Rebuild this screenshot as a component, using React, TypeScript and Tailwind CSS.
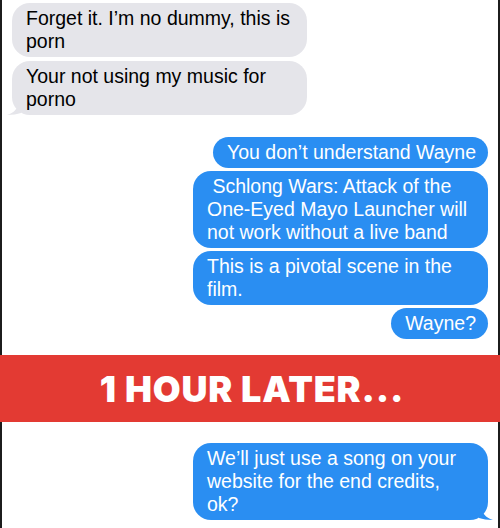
const received = [
  'Forget it. I\u2019m no dummy, this is porn',
  'Your not using my music for porno',
]

const sent = [
  'You don\u2019t understand Wayne',
  '\u00a0Schlong Wars: Attack of the One-Eyed Mayo Launcher will not work without a live band',
  'This is a pivotal scene in the film.',
  'Wayne?',
]

const Bubble = ({ text, mine, tail }: { text: string; mine?: boolean; tail?: boolean }) => {
  return (
    <div className={`relative w-fit max-w-[295px] rounded-[18px] py-[4px] text-[19.5px] leading-[23px] ${mine ? 'self-end bg-[#2a8ef2] pl-[14px] pr-[12px] text-white' : 'self-start bg-[#e5e5ea] pl-[14px] pr-[12px] text-black'}`}>
      {text}
      {tail && mine && (
        <svg className="absolute -right-[5px] bottom-0" width="14" height="12" viewBox="0 0 14 12">
          <path d="M0 0 C4 4 6 10 14 12 C8 12 4 11 0 10 Z" fill="#2a8ef2" />
        </svg>
      )}
      {tail && !mine && (
        <svg className="absolute -left-[5px] bottom-0" width="14" height="12" viewBox="0 0 14 12">
          <path d="M14 0 C10 4 8 10 0 12 C6 12 10 11 14 10 Z" fill="#e5e5ea" />
        </svg>
      )}
    </div>
  )
}

const App = () => {
  return (
    <div className="h-[528px] w-[500px] overflow-hidden bg-white" style={{ fontFamily: '"Liberation Sans", Arial, sans-serif' }}>
      <div className="flex flex-col border-x-2 border-[#1c1c1c] px-[10px] pt-[3px]">
        <div className="flex flex-col gap-[4px]">
          {received.map((t, i) => (
            <Bubble key={t} text={t} tail={i === received.length - 1} />
          ))}
        </div>
        <div className="mt-[22px] flex flex-col gap-[3px]">
          {sent.map((t) => (
            <Bubble key={t} text={t} mine />
          ))}
        </div>
        <div className="h-[16px]" />
      </div>
      <div className="flex h-[67px] items-center justify-center bg-[#e33a33] pl-[4px]">
        <span className="text-[36px] font-black tracking-[0.8px] text-white" style={{ fontFamily: 'Inter, sans-serif' }}>
          1 HOUR LATER...
        </span>
      </div>
      <div className="flex h-[120px] flex-col border-x-2 border-[#1c1c1c] px-[10px] pt-[21px]">
        <Bubble text={'We\u2019ll just use a song on your website for the end credits, ok?'} mine tail />
      </div>
    </div>
  )
}

export default App
